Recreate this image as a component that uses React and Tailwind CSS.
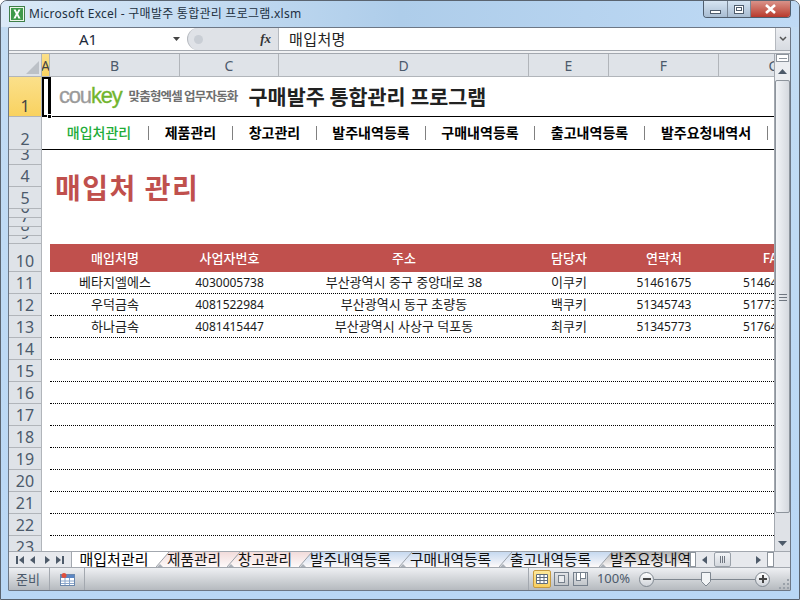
import React from "react";

const KR = "font-['Noto_Sans','Noto_Sans_CJK_KR',sans-serif]";
const CJK = "font-['Noto_Sans_CJK_KR','Noto_Sans',sans-serif]";

const cols = [
  { l: "B", w: "w-[130px]" },
  { l: "C", w: "w-[99px]" },
  { l: "D", w: "w-[250px]" },
  { l: "E", w: "w-[80px]" },
  { l: "F", w: "w-[110px]" },
  { l: "G", w: "w-[110px]" },
];

const nav = [
  ["매입처관리", "w-[99px]", "text-[#22ac38] font-medium"],
  ["제품관리", "w-[84px]", "text-black font-bold"],
  ["창고관리", "w-[84px]", "text-black font-bold"],
  ["발주내역등록", "w-[109px]", "text-black font-bold"],
  ["구매내역등록", "w-[109px]", "text-black font-bold"],
  ["출고내역등록", "w-[110px]", "text-black font-bold"],
  ["발주요청내역서", "w-[123px]", "text-black font-bold"],
];

const rowsData = [
  ["베타지엘에스", "4030005738", "부산광역시 중구 중앙대로 38", "이쿠키", "51461675", "514640000"],
  ["우덕금속", "4081522984", "부산광역시 동구 초량동", "백쿠키", "51345743", "517730000"],
  ["하나금속", "4081415447", "부산광역시 사상구 덕포동", "최쿠키", "51345773", "517640000"],
];

const header = ["매입처명", "사업자번호", "주소", "담당자", "연락처", "FAX"];
const rowNums = [14, 15, 16, 17, 18, 19, 20, 21, 22];
const cellSize = ["text-[13px]", "text-[12px]", "text-[13px]", "text-[13px]", "text-[12px]", "text-[12px]"];

const tabs = [
  ["제품관리", "w-[71px]", "from-[#f2dcdb]"],
  ["창고관리", "w-[72px]", "from-[#f2dcdb]"],
  ["발주내역등록", "w-[100px]", "from-[#c6d9f0]"],
  ["구매내역등록", "w-[100px]", "from-[#c6d9f0]"],
  ["출고내역등록", "w-[100px]", "from-[#c6d9f0]"],
  ["발주요청내역서", "w-[120px]", "from-[#b4b4b4]"],
];

function RowHead({ n, h, active }) {
  return (
    <div
      className={`${h} w-[33px] shrink-0 overflow-hidden flex items-end justify-center border-b border-r border-[#b1b5ba] ${active ? "bg-gradient-to-b from-[#fbe08a] to-[#f9d25f] text-[#444]" : "bg-[#dfe3e8] text-[#4c5a6b]"} text-[16px] leading-[20px] font-['Noto_Sans',sans-serif]`}
    >
      <span className="block shrink-0 h-[20px]">{n}</span>
    </div>
  );
}

function Row({ n, h, active, children, className = "" }) {
  return (
    <div className="flex">
      <RowHead n={n} h={h} active={active} />
      <div className={`flex-1 min-w-0 ${h} ${className}`}>{children}</div>
    </div>
  );
}

function Cells({ values, cls, sizes }) {
  return (
    <div className="flex pl-[8px] h-full">
      {values.map((v, i) => (
        <div key={i} className={`${cols[i].w} shrink-0 overflow-hidden whitespace-nowrap flex items-center justify-center ${cls} ${sizes ? sizes[i] : ""}`}>
          {v}
        </div>
      ))}
    </div>
  );
}

function NavArrow({ d }) {
  return (
    <svg width="12" height="12" viewBox="0 0 12 12" className="text-[#4d5a69]">
      <path d={d} fill="currentColor" />
    </svg>
  );
}

export default function App() {
  return (
    <div className={`w-[800px] h-[600px] overflow-hidden relative flex flex-col pl-[7px] pr-[8px] bg-gradient-to-b from-[#c3dcf3] to-[#b9d7f5] border border-[#5a6470] rounded-t-[7px] ${KR}`}>
      {/* title bar */}
      <div className="h-[26px] shrink-0 flex items-start justify-between bg-gradient-to-r from-[#dbeaf8] via-[#aecdea] to-[#bfdaf5] -ml-[7px] -mr-[8px] pl-[7px] pr-[8px]">
        <div className="flex items-center gap-[4px] h-[26px] pl-[1px]">
          <svg width="16" height="16" viewBox="0 0 16 16">
            <rect x="0.5" y="0.5" width="15" height="15" fill="#eef6ea" stroke="#3f7f4a" />
            <rect x="2" y="2" width="12" height="12" fill="#3e9a4a" />
            <path d="M4.5 3.5h2.2L8 6.3l1.4-2.8h2.1L9.2 8l2.4 4.5H9.3L8 9.6l-1.4 2.9H4.4L6.8 8z" fill="#fff" />
          </svg>
          <span className="text-[12px] text-[#22303f] whitespace-nowrap tracking-[0.25px]">Microsoft Excel - 구매발주 통합관리 프로그램.xlsm</span>
        </div>
        <div className="flex h-[17px] border border-t-0 border-[#4f5d6d] rounded-b-[4px] overflow-hidden">
          <div className="w-[24px] bg-gradient-to-b from-[#d6e4f2] to-[#a9bdd2] flex items-center justify-center border-r border-[#7a8796]">
            <div className="w-[11px] h-[4px] mt-[5px] bg-white border border-[#4f5d6d]" />
          </div>
          <div className="w-[23px] bg-gradient-to-b from-[#d6e4f2] to-[#a9bdd2] flex items-center justify-center border-r border-[#7a8796]">
            <div className="w-[10px] h-[9px] bg-white border border-[#4f5d6d] flex items-center justify-center">
              <div className="w-[6px] h-[4px] border border-[#4f5d6d]" />
            </div>
          </div>
          <div className="w-[39px] bg-gradient-to-b from-[#d99289] to-[#b8382c] flex items-center justify-center">
            <svg width="13" height="10" viewBox="0 0 13 10"><path d="M2 1l9 8M11 1l-9 8" stroke="#fff" strokeWidth="2.6" /></svg>
          </div>
        </div>
      </div>

      {/* main panel */}
      <div className="h-[564px] shrink-0 flex flex-col bg-white border border-[#6d7785] rounded-[1px]">
        {/* formula bar */}
        <div className="h-[23px] shrink-0 flex items-stretch bg-white border-b border-[#a3a8af]">
          <div className="w-[158px] flex items-center justify-center text-[15px] text-[#1c2a3a]">A1</div>
          <div className="w-[20px] flex items-center justify-end pr-[7px]">
            <svg width="7" height="4" viewBox="0 0 7 4"><path d="M0 0h7L3.5 4z" fill="#444" /></svg>
          </div>
          <div className="w-[91px] flex items-center bg-[#dfe2e7] rounded-l-[11px] border-l border-[#b5b9bf] justify-between pr-[7px] pl-[6px]">
            <div className="w-[9px] h-[9px] rounded-full bg-[#c9ced5]" />
            <span className="font-['Liberation_Serif',serif] italic font-bold text-[13px] text-[#333]">fx</span>
          </div>
          <div className={`flex-1 min-w-0 border-l border-[#b5b9bf] flex items-center pl-[10px] text-[15px] text-[#222] tracking-[0.4px] ${CJK}`}>매입처명</div>
          <div className="w-[15px] border-l border-[#b5b9bf] bg-gradient-to-b from-[#eceef2] to-[#d7dbe1] flex items-center justify-center">
            <svg width="8" height="6" viewBox="0 0 8 6"><path d="M1 1l3 3 3-3" fill="none" stroke="#555" strokeWidth="1.5" /></svg>
          </div>
        </div>
        <div className="h-[3px] shrink-0 bg-[#f0f1f3] border-b border-[#a3a8af]" />

        {/* sheet + vertical scrollbar */}
        <div className="flex flex-1 min-h-0">
          <div className="flex-1 min-w-0 relative overflow-hidden">
            {/* column heads */}
            <div className="flex h-[23px] bg-[#dfe3e8] border-b border-[#b1b5ba]">
              <div className="w-[33px] shrink-0 border-r border-[#b1b5ba] flex items-end justify-end p-[2px]">
                <svg width="13" height="13" viewBox="0 0 13 13"><path d="M13 0v13H0z" fill="#bcc1c7" /></svg>
              </div>
              <div className="w-[8px] shrink-0 flex items-center justify-center bg-gradient-to-b from-[#fbe08a] to-[#f9d25f] border-r border-[#b1b5ba] text-[#444] text-[14px] overflow-hidden">A</div>
              {cols.map((c) => (
                <div key={c.l} className={`${c.w} shrink-0 border-r border-[#b1b5ba] flex items-center justify-center text-[14px] text-[#4c5a6b]`}>
                  {c.l}
                </div>
              ))}
            </div>

            <Row n="1" h="h-[40px]" active className="border-b border-black">
              <div className={`flex items-center h-full pl-[17px] ${CJK}`}>
                <span className="font-['Liberation_Sans',sans-serif] text-[22px] leading-none tracking-[-1.2px] text-[#9a9a9a] pb-[2px] [-webkit-text-stroke:0.3px_currentColor]">cou<span className="text-[#72b52e]">key</span></span>
                <span className="text-[12.5px] font-bold text-[#6f6f6f] ml-[7px] tracking-[-0.8px] whitespace-nowrap">맞춤형엑셀 업무자동화</span>
                <span className="text-[20.7px] font-bold text-[#222] ml-[11px] whitespace-nowrap">구매발주 통합관리 프로그램</span>
              </div>
            </Row>
            <Row n="2" h="h-[33px]" className="border-b border-black">
              <div className={`flex items-center h-full pl-[8px] ${CJK}`}>
                {nav.map(([t, w, c]) => (
                  <div key={t} className={`${w} shrink-0 flex justify-center items-center whitespace-nowrap text-[14px] pb-[2px] ${c} border-r border-[#808080] h-[14px]`}>
                    {t}
                  </div>
                ))}
              </div>
            </Row>
            <div className="relative">
              <Row n="3" h="h-[15px]" />
              <Row n="4" h="h-[22px]" />
              <Row n="5" h="h-[22px]" />
              <div className={`absolute left-[46px] top-[17px] text-[28px] leading-[40px] font-bold text-[#c0504d] tracking-[1.5px] whitespace-nowrap ${CJK}`}>매입처 관리</div>
            </div>
            <Row n="6" h="h-[9px]" />
            <Row n="7" h="h-[9px]" />
            <Row n="8" h="h-[9px]" />
            <Row n="9" h="h-[8px]" />
            <Row n="10" h="h-[28px]" className="pl-[8px]">
              <div className="h-full bg-[#c0504d]">
                <div className="h-full -ml-[8px]">
                  <Cells values={header} cls={`text-white text-[13px] font-medium ${CJK}`} />
                </div>
              </div>
            </Row>
            {rowsData.map((r, i) => (
              <Row key={r[0]} n={11 + i} h="h-[22px]" className="ml-[8px] border-b border-dotted border-black">
                <div className="-ml-[8px] h-full">
                  <Cells values={r} sizes={cellSize} cls={`text-[#1a1a1a] ${KR}`} />
                </div>
              </Row>
            ))}
            {rowNums.map((n) => (
              <Row key={n} n={n} h="h-[22px]" className="ml-[8px] border-b border-dotted border-black" />
            ))}
            <Row n="23" h="h-[22px]" />

            {/* selection */}
            <div className="absolute left-[33px] top-[23px] w-[9px] h-[40px] border-2 border-r-[3px] border-black" />
            <div className="absolute left-[38px] top-[60px] w-[5px] h-[5px] bg-black border border-white" />
          </div>

          {/* vertical scrollbar */}
          <div className="w-[16px] shrink-0 bg-[#dfe2e7] flex flex-col border-l border-[#a3a8af]">
            <div className="h-[8px] mx-[1px] border border-[#8d949c] bg-white flex items-center justify-center">
              <div className="w-[8px] h-[1px] bg-[#8d949c]" />
            </div>
            <div className="h-[18px] flex items-center justify-center bg-[#eceef1]">
              <svg width="9" height="5" viewBox="0 0 9 5"><path d="M4.5 0L9 5H0z" fill="#4d5a69" /></svg>
            </div>
            <div className="h-[433px] shrink-0 rounded-[2px] border border-[#8d949c] bg-gradient-to-r from-[#f2f4f7] to-[#d5d9df] flex flex-col items-center pt-[213px] gap-[2px]">
              <div className="w-[8px] h-[1px] shrink-0 bg-[#6f7680]" />
              <div className="w-[8px] h-[1px] shrink-0 bg-[#6f7680]" />
              <div className="w-[8px] h-[1px] shrink-0 bg-[#6f7680]" />
            </div>
            <div className="flex-1" />
            <div className="h-[15px] flex items-center justify-center">
              <svg width="9" height="5" viewBox="0 0 9 5"><path d="M0 0h9L4.5 5z" fill="#4d5a69" /></svg>
            </div>
          </div>
        </div>

        {/* tabs row */}
        <div className="h-[16px] shrink-0 flex bg-[#e7e9ed] border-t border-[#a3a8af] relative z-10">
          <div className="w-[63px] shrink-0 flex items-center justify-around px-[4px] border-r border-[#a3a8af]">
            <NavArrow d="M2 2h2v8H2zM10 2v8L5 6z" />
            <NavArrow d="M8 2v8L3 6z" />
            <NavArrow d="M4 2v8l5-4z" />
            <NavArrow d="M2 2v8l5-4zM8 2h2v8H8z" />
          </div>
          <div className={`w-[618px] shrink-0 flex overflow-hidden bg-white ${CJK} text-[15px] leading-[13px]`}>
            <div className="w-[84px] shrink-0 bg-white flex justify-center whitespace-nowrap text-black">매입처관리</div>
            {tabs.map(([t, w, c]) => (
              <div key={t} className={`${w} shrink-0 relative pl-[11px] whitespace-nowrap text-[14.7px] text-[#111]`}>
                <div className={`absolute inset-y-0 left-0 -right-[13px] bg-gradient-to-b ${c} to-[#fdf9f9] [clip-path:polygon(13px_0,100%_0,100%_100%,0_100%)]`} />
                <svg className="absolute left-0 top-0" width="14" height="15" viewBox="0 0 14 15">
                  <path d="M0 15L13 0" stroke="#9aa1a9" fill="none" />
                  <path d="M1 15l3-3 3 3z" fill="#aab0b8" />
                </svg>
                <span className="relative">{t}</span>
              </div>
            ))}
          </div>
          <div className="w-[6px] h-[15px] shrink-0 bg-white border border-[#8d949c]" />
          <div className="flex-1 flex items-center">
            <div className="w-[18px] flex justify-center"><NavArrow d="M8 2v8L3 6z" /></div>
            <div className="w-[17px] h-[15px] rounded-[2px] border border-[#9aa1a9] bg-gradient-to-b from-[#f2f4f7] to-[#d5d9df] flex items-center justify-center gap-[1px]">
              <div className="w-[1px] h-[7px] bg-[#6f7680]" />
              <div className="w-[1px] h-[7px] bg-[#6f7680]" />
              <div className="w-[1px] h-[7px] bg-[#6f7680]" />
            </div>
            <div className="w-[20px]" />
            <div className="w-[14px] flex justify-center"><NavArrow d="M4 2v8l5-4z" /></div>
            <div className="w-[7px] h-[15px] ml-[2px] bg-white border border-[#8d949c]" />
          </div>
        </div>

        {/* status bar */}
        <div className="h-[23px] shrink-0 flex items-center bg-gradient-to-b from-[#eef0f3] to-[#b6babf] border-t border-[#a3a8af] text-[12px] text-[#4c5a6b] relative z-10">
          <div className={`w-[41px] pl-[7px] border-r border-[#a3a8af] h-full flex items-center text-[13px] ${CJK}`}>준비</div>
          <div className="w-[35px] border-r border-[#a3a8af] h-full flex items-center justify-center">
            <svg width="15" height="13" viewBox="0 0 15 13">
              <rect x="0.5" y="1.5" width="14" height="11" fill="#fff" stroke="#6a87ad" />
              <rect x="1" y="2" width="13" height="3" fill="#5b86c4" />
              <path d="M1 8h13M1 10.5h13M5 5v7M9.5 5v7" stroke="#8aa6cc" strokeWidth="1" />
              <circle cx="4" cy="2.5" r="2.5" fill="#e0503c" />
            </svg>
          </div>
          <div className="flex-1" />
          <div className="h-full border-l border-[#a3a8af] mr-[4px]" />
          <div className="w-[18px] h-[18px] rounded-[2px] border border-[#c79a3f] bg-gradient-to-b from-[#fde89a] to-[#f8cf5e] flex items-center justify-center">
            <svg width="12" height="10" viewBox="0 0 12 10"><path d="M0.5.5h11v9H.5zM.5 3.5h11M.5 6.5h11M4 .5v9M8 .5v9" fill="#fff" stroke="#5f6c7c" /></svg>
          </div>
          <div className="w-[15px] h-[14px] ml-[3px] border border-[#76808c] flex items-center justify-center">
            <div className="w-[7px] h-[8px] bg-[#e9ebee] border border-[#76808c]" />
          </div>
          <div className="w-[15px] h-[14px] ml-[4px] border border-[#76808c] flex justify-center">
            <div className="w-[5px] h-[8px] bg-white border border-t-0 border-[#76808c]" />
            <div className="w-[5px] h-[6px] bg-white border border-t-0 border-l-0 border-[#76808c]" />
          </div>
          <div className="w-[51px] text-center text-[13px] text-[#4c5a6b]">100%</div>
          <div className="w-[15px] h-[15px] rounded-full border border-[#7f8790] bg-gradient-to-b from-white to-[#cfd3d9] flex items-center justify-center">
            <div className="w-[8px] h-[2px] bg-[#444]" />
          </div>
          <div className="w-[101px] h-[1px] bg-[#7f8790] relative">
            <svg className="absolute left-[47px] -top-[7px]" width="10" height="15" viewBox="0 0 10 15"><path d="M.5.5h9v9L5 14 .5 9.5z" fill="#f2f4f6" stroke="#7f8790" /></svg>
          </div>
          <div className="w-[15px] h-[15px] rounded-full border border-[#7f8790] bg-gradient-to-b from-white to-[#cfd3d9] flex items-center justify-center relative">
            <div className="w-[8px] h-[2px] bg-[#444]" />
            <div className="absolute w-[2px] h-[8px] bg-[#444]" />
          </div>
          <div className="w-[20px] h-full flex items-end justify-end pb-[1px] pr-[1px]">
            <svg width="11" height="11" viewBox="0 0 11 11"><path d="M9 1h2v2H9zM5 5h2v2H5zM9 5h2v2H9zM1 9h2v2H1zM5 9h2v2H5zM9 9h2v2H9z" fill="#9aa1a9" /></svg>
          </div>
        </div>
      </div>
    </div>
  );
}
